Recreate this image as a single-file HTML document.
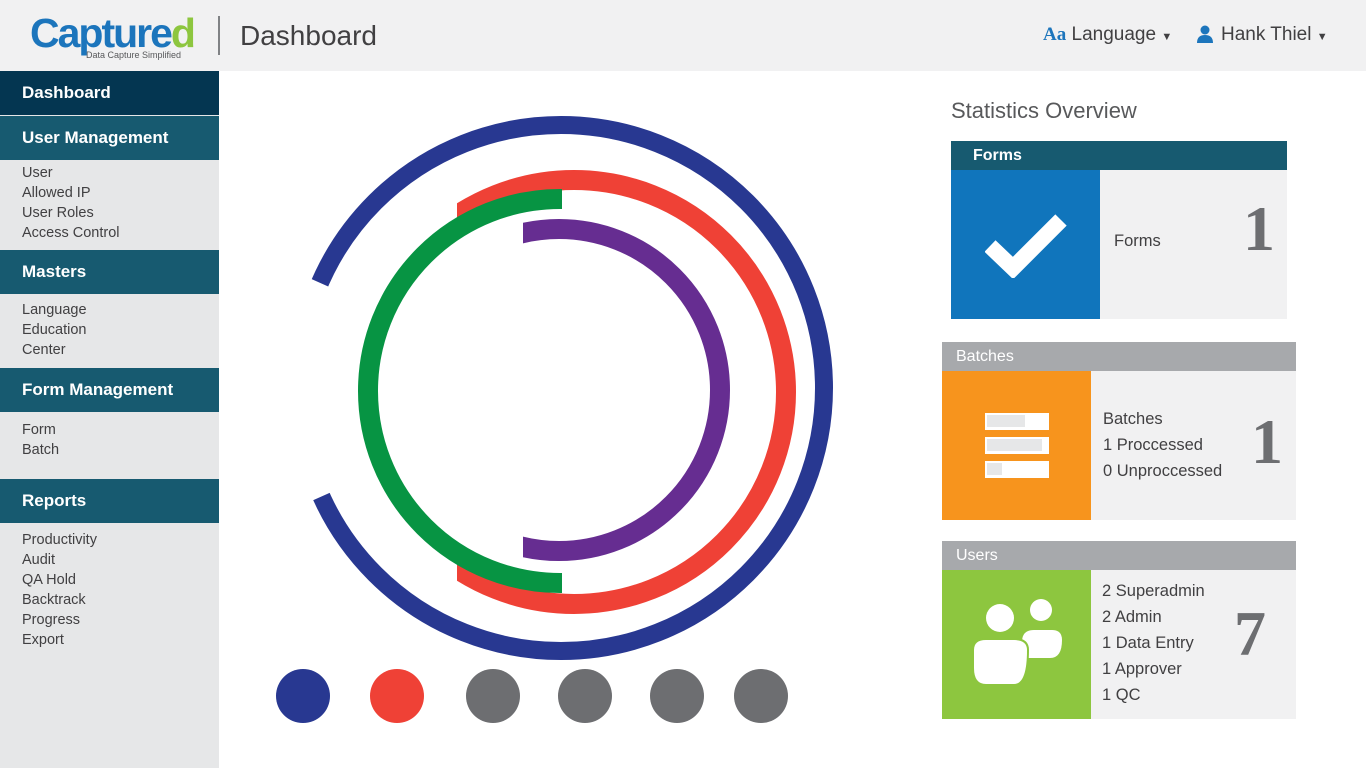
<!DOCTYPE html>
<html><head><meta charset="utf-8"><style>
*{margin:0;padding:0;box-sizing:border-box}
body{width:1366px;height:768px;overflow:hidden;background:#fff;font-family:"Liberation Sans",sans-serif;position:relative;color:#414042}
.hdr{position:absolute;left:0;top:0;width:1366px;height:71px;background:#f1f1f2}
.abs{position:absolute}
.side{position:absolute;left:0;top:71px;width:219px;height:697px;background:#e6e7e8}
.sec{position:absolute;left:0;width:219px;background:#175a70;color:#fff;font-weight:bold;font-size:17px;padding-left:22px;display:flex;align-items:center}
.items{position:absolute;left:22px;font-size:14.5px;line-height:20px;color:#414042}
.card-h{position:absolute;color:#fff;font-size:16px;padding-left:22px;display:flex;align-items:center}
.num{position:absolute;font-family:"Liberation Serif",serif;font-weight:bold;font-size:64px;color:#6d6e71}
.txt{position:absolute;font-size:16.5px;color:#414042;line-height:26px}
</style></head><body>
<div class="hdr"></div>
<div class="abs" style="left:30px;top:10px;font-size:41px;font-weight:bold;letter-spacing:-2px;color:#1c75bc">Captur<span>e</span><span style="color:#8dc63f">d</span></div>
<div class="abs" style="left:86px;top:50px;font-size:9px;color:#58595b">Data Capture Simplified</div>
<div class="abs" style="left:218px;top:16px;width:2px;height:39px;background:#808285"></div>
<div class="abs" style="left:240px;top:20px;font-size:28px;color:#414042">Dashboard</div>
<div class="abs" style="left:1043px;top:24px;font-size:19px;color:#414042"><b style="font-family:'Liberation Serif',serif;color:#1c75bc">Aa</b> Language <span style="font-size:11px">▼</span></div>
<svg class="abs" style="left:1196px;top:25px" width="18" height="18" viewBox="0 0 18 18"><circle cx="9" cy="5" r="4.5" fill="#1c75bc"/><path d="M1 18 Q1 10 9 10 Q17 10 17 18Z" fill="#1c75bc"/></svg>
<div class="abs" style="left:1221px;top:24px;font-size:19px;color:#414042">Hank Thiel <span style="font-size:11px">▼</span></div>

<div class="side"></div>
<div class="sec" style="top:71px;height:44px;background:#043651">Dashboard</div>
<div class="sec" style="top:116px;height:44px">User Management</div>
<div class="items" style="top:163px">User<br>Allowed IP<br>User Roles<br>Access Control</div>
<div class="sec" style="top:250px;height:44px">Masters</div>
<div class="items" style="top:300px">Language<br>Education<br>Center</div>
<div class="sec" style="top:368px;height:44px">Form Management</div>
<div class="items" style="top:420px">Form<br>Batch</div>
<div class="sec" style="top:479px;height:44px">Reports</div>
<div class="items" style="top:530px">Productivity<br>Audit<br>QA Hold<br>Backtrack<br>Progress<br>Export</div>

<svg class="abs" style="left:0;top:0" width="1366" height="768">
<defs>
<clipPath id="cb"><polygon points="560,390 0,140 0,0 1366,0 1366,768 0,768 0,640"/></clipPath>
<clipPath id="cr"><rect x="457" y="0" width="600" height="768"/></clipPath>
<clipPath id="cg"><rect x="0" y="0" width="562" height="768"/></clipPath>
<clipPath id="cp"><rect x="523" y="0" width="600" height="768"/></clipPath>
</defs>
<circle cx="561" cy="388" r="263" fill="none" stroke="#283891" stroke-width="18" clip-path="url(#cb)"/>
<circle cx="574" cy="392" r="212" fill="none" stroke="#ef4136" stroke-width="20" clip-path="url(#cr)"/>
<circle cx="560" cy="391" r="192" fill="none" stroke="#079443" stroke-width="20" clip-path="url(#cg)"/>
<circle cx="559" cy="390" r="161" fill="none" stroke="#662d91" stroke-width="20" clip-path="url(#cp)"/>
<circle cx="303" cy="696" r="27" fill="#283891"/>
<circle cx="397" cy="696" r="27" fill="#ef4136"/>
<circle cx="493" cy="696" r="27" fill="#6d6e71"/>
<circle cx="585" cy="696" r="27" fill="#6d6e71"/>
<circle cx="677" cy="696" r="27" fill="#6d6e71"/>
<circle cx="761" cy="696" r="27" fill="#6d6e71"/>
</svg>

<div class="abs" style="left:951px;top:98px;font-size:22px;color:#58595b">Statistics Overview</div>

<div class="card-h" style="left:951px;top:141px;width:336px;height:29px;background:#175a70;font-weight:bold">Forms</div>
<div class="abs" style="left:951px;top:170px;width:149px;height:149px;background:#1075bc"></div>
<svg class="abs" style="left:985px;top:210px" width="82" height="68" viewBox="0 0 82 68"><path d="M5 36 L28 58 L76 10" fill="none" stroke="#fff" stroke-width="16"/></svg>
<div class="abs" style="left:1100px;top:170px;width:187px;height:149px;background:#f1f1f2"></div>
<div class="txt" style="left:1114px;top:228px">Forms</div>
<div class="num" style="left:1243px;top:192px">1</div>

<div class="card-h" style="left:942px;top:342px;width:354px;height:29px;background:#a7a9ac;padding-left:14px">Batches</div>
<div class="abs" style="left:942px;top:371px;width:149px;height:149px;background:#f7941d"></div>
<div class="abs" style="left:985px;top:413px;width:64px;height:17px;background:#fff"><div style="margin:2px;width:38px;height:12px;background:#e6e7e8"></div></div>
<div class="abs" style="left:985px;top:437px;width:64px;height:17px;background:#fff"><div style="margin:2px;width:55px;height:12px;background:#e6e7e8"></div></div>
<div class="abs" style="left:985px;top:461px;width:64px;height:17px;background:#fff"><div style="margin:2px;width:15px;height:12px;background:#e6e7e8"></div></div>
<div class="abs" style="left:1091px;top:371px;width:205px;height:149px;background:#f1f1f2"></div>
<div class="txt" style="left:1103px;top:406px">Batches<br>1 Proccessed<br>0 Unproccessed</div>
<div class="num" style="left:1251px;top:405px">1</div>

<div class="card-h" style="left:942px;top:541px;width:354px;height:29px;background:#a7a9ac;padding-left:14px">Users</div>
<div class="abs" style="left:942px;top:570px;width:149px;height:149px;background:#8dc63f"></div>
<svg class="abs" style="left:972px;top:596px" width="92" height="92" viewBox="0 0 92 92"><circle cx="69" cy="14" r="11" fill="#fff"/><path d="M50 46 Q50 34 62 34 L80 34 Q90 34 90 44 Q90 62 78 62 L56 62Z" fill="#fff"/><circle cx="28" cy="22" r="16" fill="#8dc63f"/><circle cx="28" cy="22" r="14" fill="#fff"/><path d="M0 54 Q0 42 14 42 L42 42 Q57 42 57 54 Q57 90 42 90 L12 90 Q0 90 0 72Z" fill="#8dc63f"/><path d="M2 54 Q2 44 14 44 L42 44 Q55 44 55 54 Q55 88 42 88 L14 88 Q2 88 2 72Z" fill="#fff"/></svg>
<div class="abs" style="left:1091px;top:570px;width:205px;height:149px;background:#f1f1f2"></div>
<div class="txt" style="left:1102px;top:578px">2 Superadmin<br>2 Admin<br>1 Data Entry<br>1 Approver<br>1 QC</div>
<div class="num" style="left:1234px;top:597px">7</div>
</body></html>
